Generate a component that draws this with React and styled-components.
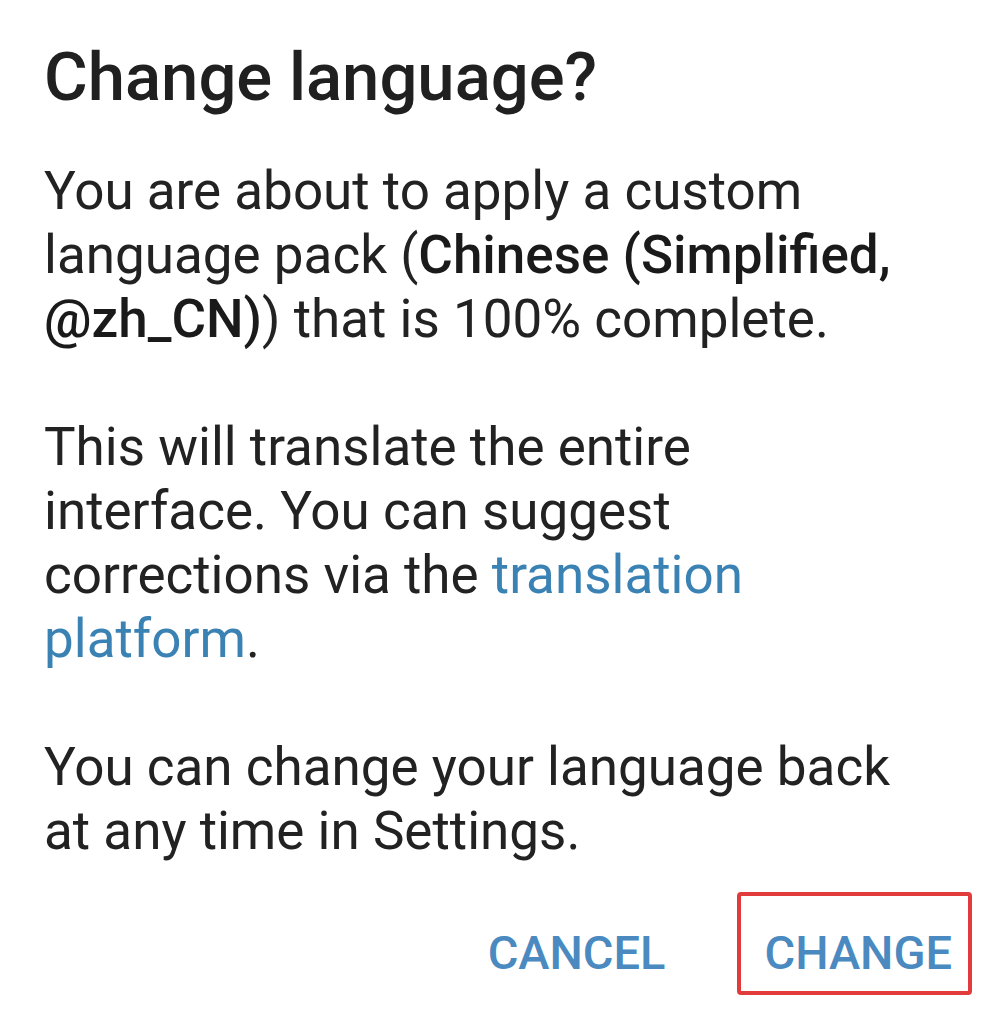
import React from 'react'
import styled, { createGlobalStyle } from 'styled-components'

const GlobalStyle = createGlobalStyle`
    html, body {
        margin: 0;
        padding: 0;
        background: #fff;
    }
    body {
        font-family: Roboto, "Liberation Sans", sans-serif;
        -webkit-font-smoothing: antialiased;
    }
`

const Dialog = styled.div`
    width: 1006px;
    height: 1024px;
    box-sizing: border-box;
    background: #fff;
    padding: 37px 34px 0 44px;
`

const Title = styled.h1`
    margin: 0 0 42px;
    font-size: 67px;
    line-height: 80px;
    font-weight: 500;
    color: #202020;
`

const Body = styled.div`
    max-width: 875px;
    font-size: 53px;
    line-height: 64px;
    color: #222;
`

const Paragraph = styled.p`
    margin: 0 0 ${(p) => (p.last ? 0 : 64)}px;
`

const Bold = styled.b`
    font-weight: 500;
    color: #1a1a1a;
`

const Link = styled.a`
    color: #3b82b4;
    text-decoration: none;
`

const Actions = styled.div`
    display: flex;
    justify-content: flex-end;
    align-items: baseline;
    margin-top: 29px;
`

const Button = styled.button`
    font-family: Roboto, "Liberation Sans", sans-serif;
    font-size: 47px;
    line-height: 56px;
    font-weight: 500;
    color: #4a8ac0;
    background: none;
    cursor: pointer;
    border: ${(p) => (p.highlighted ? '4px solid #e23b3b' : 'none')};
    border-radius: 4px;
    padding: ${(p) => (p.highlighted ? '29px 16px 10px 23px' : '0')};
    margin-right: ${(p) => (p.highlighted ? 0 : 72)}px;
`

const App = () => {
    return (
        <>
            <GlobalStyle />
            <Dialog>
                <Title>Change language?</Title>
                <Body>
                    <Paragraph>
                        You are about to apply a custom language pack (
                        <Bold>Chinese (Simplified, @zh_CN)</Bold>) that is 100% complete.
                    </Paragraph>
                    <Paragraph>
                        This will translate the entire interface. You can suggest corrections
                        via the <Link href="#">translation platform</Link>.
                    </Paragraph>
                    <Paragraph last>
                        You can change your language back at any time in Settings.
                    </Paragraph>
                </Body>
                <Actions>
                    <Button>CANCEL</Button>
                    <Button highlighted>CHANGE</Button>
                </Actions>
            </Dialog>
        </>
    )
}

export default App
